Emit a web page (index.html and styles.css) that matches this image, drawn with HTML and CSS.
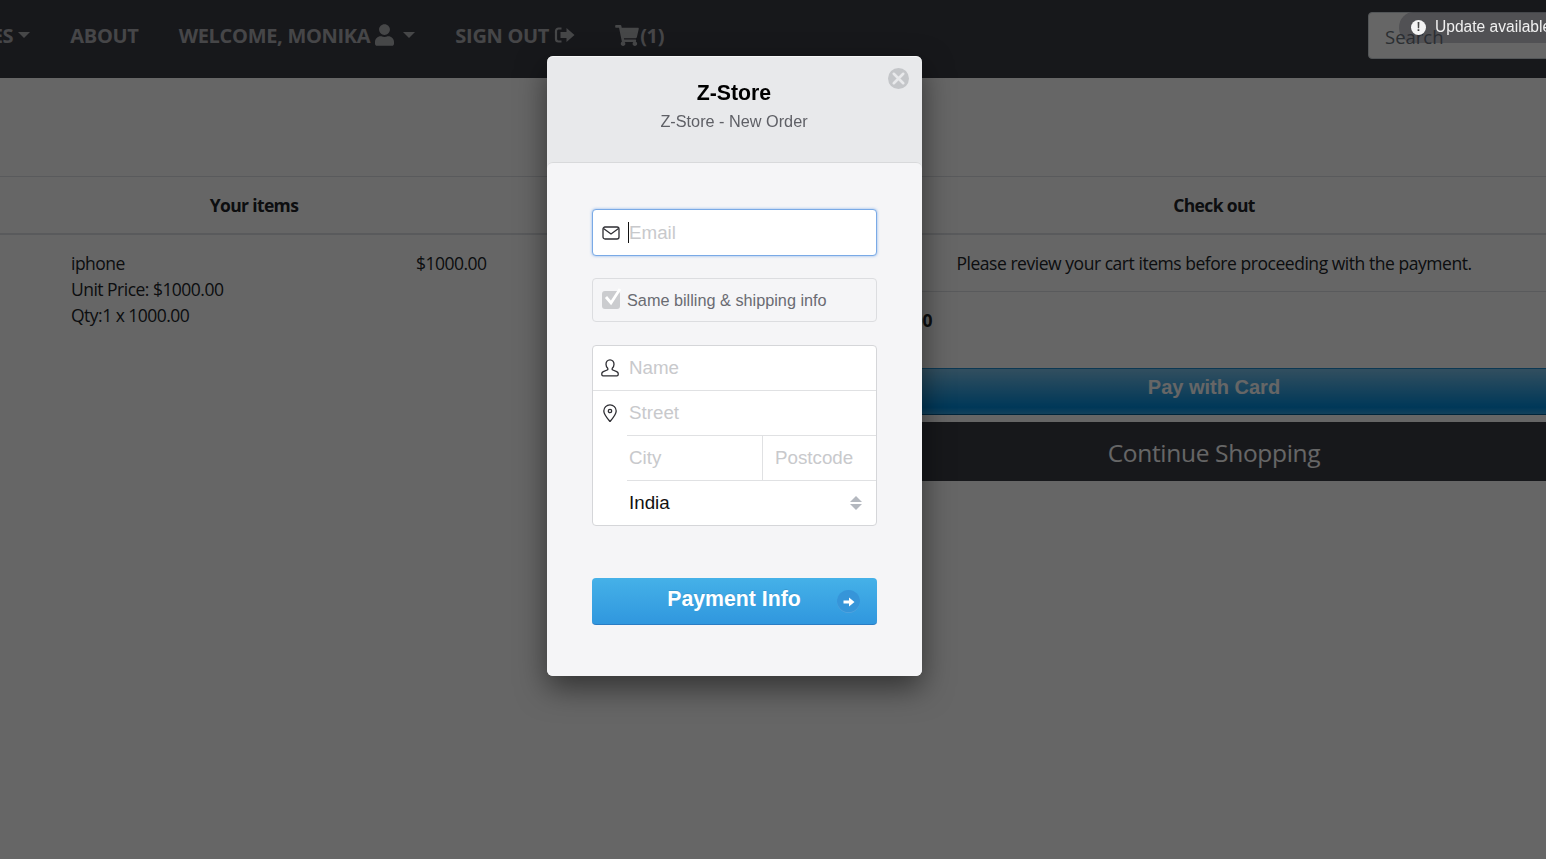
FILE: index.html
```html
<!DOCTYPE html>
<html lang="en">
<head>
<meta charset="utf-8">
<title>Z-Store Cart</title>
<link rel="stylesheet" href="styles.css">
</head>
<body>
<div class="page">
  <nav class="navbar">
    <ul class="nav-list">
      <li class="nav-item"><a>CATEGORIES</a><span class="caret"></span></li>
      <li class="nav-item"><a>ABOUT</a></li>
      <li class="nav-item"><a>WELCOME, MONIKA</a>
        <svg class="ic-user" viewBox="0 0 448 512"><path d="M224 256c70.7 0 128-57.3 128-128S294.7 0 224 0 96 57.3 96 128s57.3 128 128 128zm89.6 32h-16.7c-22.2 10.2-46.9 16-72.9 16s-50.6-5.8-72.9-16h-16.7C60.2 288 0 348.2 0 422.4V464c0 26.5 21.5 48 48 48h352c26.5 0 48-21.5 48-48v-41.6c0-74.2-60.2-134.4-134.4-134.4z"/></svg>
        <span class="caret caret-wide"></span></li>
      <li class="nav-item"><a>SIGN OUT</a>
        <svg class="ic-signout" viewBox="0 0 20 16"><path d="M7 1.500H4A2.500 2.500 0 0 0 1.500 4v8A2.500 2.500 0 0 0 4 14.500h3" fill="none" stroke="currentColor" stroke-width="2.200"/><path d="M12 1l8 7-8 7v-4H6V5h6z"/></svg></li>
      <li class="nav-item"><svg class="ic-cart" viewBox="0 0 576 512"><path d="M528.12 301.319l47.273-208C578.806 78.301 567.391 64 551.99 64H159.208l-9.166-44.81C147.758 8.021 137.93 0 126.529 0H24C10.745 0 0 10.745 0 24v16c0 13.255 10.745 24 24 24h69.883l70.248 343.435C147.325 417.1 136 435.222 136 456c0 30.928 25.072 56 56 56s56-25.072 56-56c0-15.674-6.447-29.835-16.824-40h209.647C430.447 426.165 424 440.326 424 456c0 30.928 25.072 56 56 56s56-25.072 56-56c0-22.172-12.888-41.332-31.579-50.405l5.517-24.276c3.413-15.018-8.002-29.319-23.403-29.319H218.117l-6.545-32h293.145c11.206 0 20.92-7.754 23.403-18.681z"/></svg><a class="cart-count">(1)</a></li>
    </ul>
    <div class="search">Search</div>
  </nav>

  <main class="cart">
    <section class="col-items">
      <h2 class="col-title">Your items</h2>
      <div class="item-row">
        <div class="item-desc">
          <div>iphone</div>
          <div>Unit Price: $1000.00</div>
          <div>Qty:1 x 1000.00</div>
        </div>
        <div class="item-price">$1000.00</div>
      </div>
    </section>
    <section class="col-check">
      <h2 class="col-title">Check out</h2>
      <p class="review">Please review your cart items before proceeding with the payment.</p>
      <div class="total">Total: $1000.00</div>
      <button class="btn-pay">Pay with Card</button>
      <button class="btn-continue">Continue Shopping</button>
    </section>
  </main>
</div>

<div class="backdrop"></div>

<div class="modal">
  <header class="modal-head">
    <h1 class="modal-title">Z-Store</h1>
    <div class="modal-sub">Z-Store - New Order</div>
    <span class="close"><svg viewBox="0 0 12 12"><path d="M3.300 3.300l5.400 5.400M8.700 3.300l-5.400 5.400"/></svg></span>
  </header>
  <div class="modal-body">
    <div class="field field-email">
      <svg class="f-ic" viewBox="0 0 18 14"><rect x="1" y="1" width="16" height="12" rx="2"/><path d="M1.500 2.500L9 8l7.500-5.500"/></svg>
      <span class="caret-bar"></span><span class="ph">Email</span>
    </div>
    <div class="same">
      <span class="check"><svg viewBox="0 0 20 20"><path d="M4 9l5 6L18 1"/></svg></span>
      <span>Same billing &amp; shipping info</span>
    </div>
    <div class="addr">
      <div class="addr-row">
        <svg class="f-ic" viewBox="0 0 18 18"><path d="M9 .8c-2.500 0-4 1.900-4 4.500 0 1.700.7 3 1.700 4 .4.500.2 1.400-.5 1.700L2.300 12.600c-1 .5-1.500 1.100-1.500 2v.9c0 .8.500 1.300 1.200 1.300h14c.7 0 1.200-.5 1.200-1.300v-.9c0-.9-.5-1.500-1.500-2L11.800 11c-.7-.3-.9-1.200-.5-1.700 1-1 1.700-2.300 1.700-4C13 2.700 11.500.8 9 .8z"/></svg>
        <span class="ph">Name</span>
      </div>
      <div class="addr-row">
        <svg class="f-ic" viewBox="0 0 18 18"><path d="M9 17.500C5.500 13.500 2.800 10.500 2.800 7a6.200 6.200 0 0 1 12.400 0c0 3.500-2.700 6.500-6.200 10.500z"/><circle cx="9" cy="7" r="1.700"/></svg>
        <span class="ph">Street</span>
      </div>
      <div class="addr-inner">
        <div class="addr-split">
          <span class="ph cell-city">City</span>
          <span class="ph cell-post">Postcode</span>
        </div>
        <div class="addr-country">
          <span class="val">India</span>
          <span class="updown"><i class="up"></i><i class="down"></i></span>
        </div>
      </div>
    </div>
    <button class="btn-submit">
      <span class="btn-label">Payment Info</span>
      <span class="btn-arrow"><svg viewBox="0 0 12 12"><path d="M.5 4.500h5.500V1.500L11.500 6 6 10.500v-3H.5z"/></svg></span>
    </button>
  </div>
</div>

<div class="toast">
  <span class="toast-ic">!</span><span>Update available</span>
</div>
</body>
</html>
```

FILE: styles.css
```css
* { box-sizing: border-box; }
html, body { margin: 0; height: 100%; }
body {
  font-family: "Open Sans", "Noto Sans", sans-serif;
  color: #212529;
  background: #fff;
  overflow: hidden;
}
.page { width: 1546px; }

/* navbar */
.navbar {
  height: 78px;
  background: #3a3c45;
  display: flex;
  align-items: center;
  justify-content: space-between;
  padding: 0 0 8px;
  position: relative;
  overflow: hidden;
}
.nav-list {
  display: flex;
  align-items: center;
  gap: 40px;
  list-style: none;
  margin: 0 0 0 -105.500px;
  padding: 0;
  height: 100%;
}
.nav-item {
  display: flex;
  align-items: center;
  font-size: 20px;
  font-weight: 700;
  letter-spacing: -0.3px;
  white-space: nowrap;
  color: rgba(255,255,255,.6);
}
.caret {
  display: inline-block;
  border-top: 6px solid currentColor;
  border-left: 6px solid transparent;
  border-right: 6px solid transparent;
  margin-left: 5px;
}
.caret-wide { margin-left: 9px; }
.nav-item svg { fill: currentColor; display: block; }
.ic-user { width: 19px; height: 22px; margin-left: 5px; }
.ic-signout { width: 21px; height: 16px; margin-left: 5px; }
.ic-cart { width: 24px; height: 21px; }
.cart-count { margin-left: 1px; }
.search {
  width: 260px;
  height: 47px;
  margin-left: auto;
  margin-right: -82px;
  background: #fff;
  border: 1px solid #ced4da;
  border-radius: 4px;
  padding: 2px 16px 0;
  display: flex;
  align-items: center;
  color: #6c757d;
  font-size: 18.500px;
}

/* cart */
.cart {
  display: grid;
  grid-template-columns: 508px 374px 664px;
  margin-top: 98px;
  border-top: 1px solid #dee2e6;
}
.col-items { grid-column: 1 / 3; position: relative; }
.col-check { grid-column: 3; }
.col-title {
  font-size: 17.500px;
  font-weight: 700;
  letter-spacing: -0.65px;
  margin: 0;
  height: 58px;
  line-height: 56px;
  text-align: center;
  border-bottom: 2px solid #dee2e6;
}
.col-items .col-title { width: 508px; }
.item-row {
  display: flex;
  padding: 15px 0 0 71px;
  font-size: 17.500px;
  line-height: 26px;
  letter-spacing: -0.52px;
  width: 100%;
}
.item-desc { width: 345px; }
.col-items::after {
  content: "";
  position: absolute;
  left: 508px;
  right: 0;
  top: 56px;
  border-top: 2px solid #dee2e6;
}
.review {
  margin: 0;
  height: 57px;
  line-height: 56px;
  text-align: center;
  font-size: 17.500px;
  letter-spacing: -0.46px;
  border-bottom: 1px solid #dee2e6;
  white-space: nowrap;
}
.total {
  font-size: 17.500px;
  font-weight: 700;
  height: 76px;
  line-height: 57px;
  margin-left: -73px;
  letter-spacing: -0.4px;
}
.btn-pay {
  display: block;
  width: 100%;
  height: 47px;
  border: 0;
  border-top: 1px solid #1e8cd0;
  border-bottom: 1px solid #015e94;
  background: linear-gradient(#7dc5ee, #008cdd 85%, #30a2e4);
  color: #fff;
  font-family: "Liberation Sans", sans-serif;
  font-weight: 700;
  font-size: 20px;
  padding: 0 0 8px;
}
.btn-continue {
  display: block;
  width: 100%;
  height: 59px;
  margin-top: 7px;
  border: 0;
  padding: 2px 0 0;
  background: #3a3c45;
  color: #fff;
  font-family: inherit;
  font-size: 24.500px;
  letter-spacing: -0.32px;
}

.backdrop {
  position: fixed;
  inset: 0;
  background: rgba(0,0,0,.6);
}

/* modal */
.modal {
  position: absolute;
  left: 547px;
  top: 56px;
  width: 375px;
  height: 620px;
  border-radius: 6px;
  background: #e8e9eb;
  box-shadow: 0 12px 30px rgba(0,0,0,.5), inset 0 1px 0 rgba(255,255,255,.65);
  font-family: "Liberation Sans", sans-serif;
  display: flex;
  flex-direction: column;
}
.modal-head {
  height: 106px;
  padding: 25px 1px 0 0;
  text-align: center;
  position: relative;
}
.modal-title {
  margin: 0;
  font-size: 21.250px;
  line-height: 24px;
  font-weight: 700;
  color: #000;
}
.modal-sub {
  margin-top: 6px;
  font-size: 16.250px;
  line-height: 20px;
  color: #5f6066;
}
.close {
  position: absolute;
  right: 13px;
  top: 12px;
  width: 21px;
  height: 21px;
  border-radius: 50%;
  background: #c4c6c9;
  display: flex;
}
.close svg { width: 21px; height: 21px; fill: none; stroke: #e8e9eb; stroke-width: 1.500; stroke-linecap: round; }
.modal-body {
  flex: 1;
  background: #f5f5f7;
  border-top: 1px solid #d8d9db;
  border-radius: 6px;
  padding: 46px 45px 0;
  display: flex;
  flex-direction: column;
}
.f-ic { width: 18px; height: 18px; fill: none; stroke: #2e2e33; stroke-width: 1.300; flex: none; }
.ph { color: #c8c9cc; font-size: 18.750px; }
.field-email {
  height: 47px;
  background: #fff;
  border: 1px solid #7aaae6;
  border-radius: 4px;
  box-shadow: 0 0 3px rgba(90,150,230,.7);
  display: flex;
  align-items: center;
  padding-left: 9px;
}
.caret-bar { width: 1px; height: 21px; background: #111; margin-left: 8px; }
.same {
  margin-top: 22px;
  height: 44px;
  border: 1px solid #dcdde0;
  border-radius: 4px;
  display: flex;
  align-items: center;
  padding-left: 9px;
  gap: 7px;
  color: #6a6b72;
  font-size: 16.250px;
}
.check {
  width: 18px;
  height: 18px;
  background: #cbcccf;
  border-radius: 3px;
  display: block;
  position: relative;
}
.check svg {
  position: absolute;
  left: 0;
  top: -3px;
  width: 20px;
  height: 20px;
  fill: none;
  stroke: #fff;
  stroke-width: 2.800;
}
.addr {
  margin-top: 23px;
  height: 181px;
  background: #fff;
  border: 1px solid #d5d6d9;
  border-radius: 4px;
}
.addr-row {
  height: 45px;
  display: flex;
  align-items: center;
  padding-left: 8px;
  gap: 10px;
  border-bottom: 1px solid #e0e1e3;
}
.addr-row + .addr-row { border-bottom: 0; height: 44px; }
.addr-inner { margin-left: 34px; }
.addr-split {
  height: 46px;
  display: flex;
  border-top: 1px solid #e0e1e3;
  border-bottom: 1px solid #e0e1e3;
  align-items: stretch;
}
.cell-city { width: 136px; padding-left: 2px; border-right: 1px solid #e0e1e3; line-height: 43px; }
.cell-post { padding-left: 12px; line-height: 43px; }
.addr-country {
  height: 44px;
  display: flex;
  align-items: center;
  justify-content: space-between;
  padding: 0 14px 0 2px;
}
.val { font-size: 18.750px; color: #111; }
.updown { display: flex; flex-direction: column; gap: 2px; }
.up, .down { display: block; border-left: 6px solid transparent; border-right: 6px solid transparent; }
.up { border-bottom: 6.500px solid #b4b8bf; }
.down { border-top: 6.500px solid #b4b8bf; }
.btn-submit {
  margin-top: 52px;
  height: 47px;
  border: 0;
  border-bottom: 1px solid #2a7cc4;
  border-radius: 4px;
  background: linear-gradient(#45b1e8, #3097de);
  color: #fff;
  font-family: "Liberation Sans", sans-serif;
  font-weight: 700;
  font-size: 21.250px;
  position: relative;
  padding: 0 1px 4px 0;
  text-shadow: 0 -1px 0 rgba(0,0,0,.1);
  display: block;
  width: 100%;
}
.btn-arrow {
  position: absolute;
  right: 17px;
  top: 12px;
  width: 23px;
  height: 23px;
  border-radius: 50%;
  background: #3695d9;
  box-shadow: inset 0 -1px 0 rgba(255,255,255,.12);
  display: flex;
  align-items: center;
  justify-content: center;
}
.btn-arrow svg { width: 12px; height: 12px; fill: #fff; }

/* toast */
.toast {
  position: fixed;
  left: 1399px;
  top: 12px;
  width: 170px;
  height: 31px;
  border-radius: 15px;
  background: rgba(40,40,50,.35);
  color: #f0f0f0;
  display: flex;
  align-items: center;
  padding: 0 0 1px 12px;
  gap: 9px;
  font-family: "Liberation Sans", sans-serif;
  font-size: 15.600px;
  white-space: nowrap;
}
.toast-ic {
  width: 15px;
  height: 15px;
  border-radius: 50%;
  background: #f4f4f4;
  color: #444;
  font-size: 12px;
  font-weight: 700;
  text-align: center;
  line-height: 15px;
}
```
